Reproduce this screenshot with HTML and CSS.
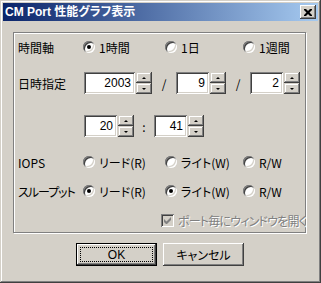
FILE: index.html
```html
<!DOCTYPE html>
<html lang="ja">
<head>
    <meta charset="UTF-8">
    <title>CM Port 性能グラフ表示</title>
    <link rel="stylesheet" href="styles.css">
</head>
<body>
    <div class="window">
        <div class="titlebar">
            <span class="title">CM Port 性能グラフ表示</span>
            <span class="close">
                <svg width="8" height="7" viewBox="0 0 8 7"><path d="M0 0h2l2 2 2-2h2v1l-2.5 2.5L8 6v1H6L4 5 2 7H0V6l2.5-2.5L0 1z" fill="#000"/></svg>
            </span>
        </div>

        <div class="client">
            <div class="group">
                <div class="row radios">
                    <div class="label">時間軸</div>
                    <div class="opt"><span class="radio on"></span>1時間</div>
                    <div class="opt"><span class="radio"></span>1日</div>
                    <div class="opt"><span class="radio"></span>1週間</div>
                </div>

                <div class="row fields date">
                    <div class="label wide">日時指定</div>
                    <div class="edit w51">2003</div>
                    <div class="spin"><span class="up"></span><span class="down"></span></div>
                    <div class="sep w24">/</div>
                    <div class="edit">9</div>
                    <div class="spin"><span class="up"></span><span class="down"></span></div>
                    <div class="sep w24">/</div>
                    <div class="edit">2</div>
                    <div class="spin"><span class="up"></span><span class="down"></span></div>
                </div>

                <div class="row fields time">
                    <div class="label wide"></div>
                    <div class="edit">20</div>
                    <div class="spin"><span class="up"></span><span class="down"></span></div>
                    <div class="sep w20">:</div>
                    <div class="edit">41</div>
                    <div class="spin"><span class="up"></span><span class="down"></span></div>
                </div>

                <div class="row radios iops">
                    <div class="label">IOPS</div>
                    <div class="opt"><span class="radio"></span>リード(R)</div>
                    <div class="opt"><span class="radio"></span>ライト(W)</div>
                    <div class="opt"><span class="radio"></span>R/W</div>
                </div>

                <div class="row radios thru">
                    <div class="label narrow">スループット</div>
                    <div class="opt"><span class="radio on"></span>リード(R)</div>
                    <div class="opt"><span class="radio on"></span>ライト(W)</div>
                    <div class="opt"><span class="radio"></span>R/W</div>
                </div>

                <div class="row check">
                    <span class="checkbox">
                        <svg width="7" height="7" viewBox="0 0 7 7"><path d="M0 2v3l2 2h1l4-4V0L2.5 4.5z" fill="#808080"/></svg>
                    </span>
                    <span class="disabled">ポート毎にウィンドウを開く</span>
                </div>
            </div>

            <div class="buttons">
                <div class="btn default"><span class="focus">OK</span></div>
                <div class="btn">キャンセル</div>
            </div>
        </div>
    </div>
</body>
</html>
```

FILE: styles.css
```css
* {
    margin: 0;
    padding: 0;
    box-sizing: border-box;
}

body {
    font-family: 'Noto Sans CJK JP', 'Liberation Sans', sans-serif;
    font-size: 12px;
    font-feature-settings: "palt";
    color: #000;
    background: #d4d0c8;
}

.window {
    width: 321px;
    height: 283px;
    padding: 3px;
    background: #d4d0c8;
    box-shadow: inset -1px -1px 0 #404040, inset 1px 1px 0 #d4d0c8,
                inset -2px -2px 0 #808080, inset 2px 2px 0 #ffffff;
}

.titlebar {
    height: 18px;
    display: flex;
    align-items: center;
    justify-content: space-between;
    padding: 0 2px;
    background: linear-gradient(90deg, #0a246a 0%, #a6caf0 100%);
}

.title {
    color: #fff;
    font-family: 'Liberation Sans', 'Noto Sans CJK JP', sans-serif;
    font-weight: 700;
    font-size: 12px;
    line-height: 18px;
}

.close {
    width: 16px;
    height: 14px;
    display: flex;
    align-items: center;
    justify-content: center;
    background: #d4d0c8;
    box-shadow: inset -1px -1px 0 #404040, inset 1px 1px 0 #ffffff,
                inset -2px -2px 0 #808080;
}

.close svg {
    margin-left: -1px;
}

.client {
    padding-top: 1px;
}

/* group box with etched edge */
.group {
    width: 293px;
    height: 201px;
    margin: 10px 0 0 10px;
    padding: 6px 0 0 4px;
    border: 1px solid #808080;
    box-shadow: inset 1px 1px 0 #fff, 1px 1px 0 #fff;
}

.row {
    display: flex;
    align-items: center;
}

.row > * {
    flex-shrink: 0;
}

.label {
    width: 65px;
    white-space: nowrap;
}

.label.wide {
    width: 66px;
}

.label.narrow {
    letter-spacing: -1px;
}

.radios {
    height: 16px;
}

.opt {
    display: flex;
    align-items: center;
    gap: 4px;
    width: 82px;
    white-space: nowrap;
}

.opt + .opt {
    width: 78px;
}

.opt:last-child {
    width: auto;
}

.radio {
    width: 12px;
    height: 12px;
    border-radius: 50%;
    background: #fff;
    position: relative;
    box-shadow: inset 1px 1px 0 #808080, inset -1px -1px 0 #fff,
                inset 2px 2px 0 #404040, inset -2px -2px 0 #d4d0c8;
}

.radio.on::after {
    content: '';
    position: absolute;
    left: 4px;
    top: 4px;
    width: 4px;
    height: 4px;
    border-radius: 50%;
    background: #000;
}

.fields {
    height: 22px;
}

.date {
    margin-top: 17px;
}

.time {
    margin-top: 21px;
}

.iops {
    margin-top: 17px;
}

.thru {
    margin-top: 13px;
}

.edit {
    width: 33px;
    height: 22px;
    padding-right: 4px;
    text-align: right;
    line-height: 22px;
    font-family: 'Liberation Sans', sans-serif;
    background: #fff;
    box-shadow: inset 1px 1px 0 #808080, inset -1px -1px 0 #fff,
                inset 2px 2px 0 #404040, inset -2px -2px 0 #d4d0c8;
}

.edit.w51 {
    width: 51px;
}

.spin {
    width: 16px;
    height: 22px;
    margin-left: 1px;
    display: flex;
    flex-direction: column;
}

.spin span {
    height: 11px;
    display: flex;
    align-items: center;
    justify-content: center;
    background: #d4d0c8;
    box-shadow: inset -1px -1px 0 #404040, inset 1px 1px 0 #d4d0c8,
                inset -2px -2px 0 #808080, inset 2px 2px 0 #fff;
}

.spin span::before {
    content: '';
    width: 0;
    height: 0;
    border-left: 2px solid transparent;
    border-right: 2px solid transparent;
}

.spin .up::before {
    border-bottom: 2px solid #000;
}

.spin .down::before {
    border-top: 2px solid #000;
}

.sep {
    text-align: center;
}

.w24 {
    width: 24px;
}

.w20 {
    width: 20px;
}

.check {
    height: 14px;
    margin-top: 14px;
    padding-left: 143px;
    gap: 4px;
}

.checkbox {
    width: 13px;
    height: 13px;
    display: flex;
    align-items: center;
    justify-content: center;
    background: #d4d0c8;
    box-shadow: inset 1px 1px 0 #808080, inset -1px -1px 0 #fff,
                inset 2px 2px 0 #404040, inset -2px -2px 0 #d4d0c8;
}

.disabled {
    color: #808080;
    text-shadow: 1px 1px 0 #fff;
    letter-spacing: -0.8px;
    white-space: nowrap;
}

.buttons {
    display: flex;
    gap: 6px;
    margin: 10px 0 0 73px;
}

.btn {
    width: 81px;
    height: 23px;
    display: flex;
    align-items: center;
    justify-content: center;
    background: #d4d0c8;
    box-shadow: inset -1px -1px 0 #404040, inset 1px 1px 0 #fff,
                inset -2px -2px 0 #808080;
}

.btn.default {
    box-shadow: inset 0 0 0 1px #000, inset -2px -2px 0 #404040,
                inset 2px 2px 0 #fff, inset -3px -3px 0 #808080;
}

.focus {
    width: 73px;
    height: 15px;
    display: flex;
    align-items: center;
    justify-content: center;
    border: 1px dotted #000;
    font-family: 'Liberation Sans', sans-serif;
}
```
